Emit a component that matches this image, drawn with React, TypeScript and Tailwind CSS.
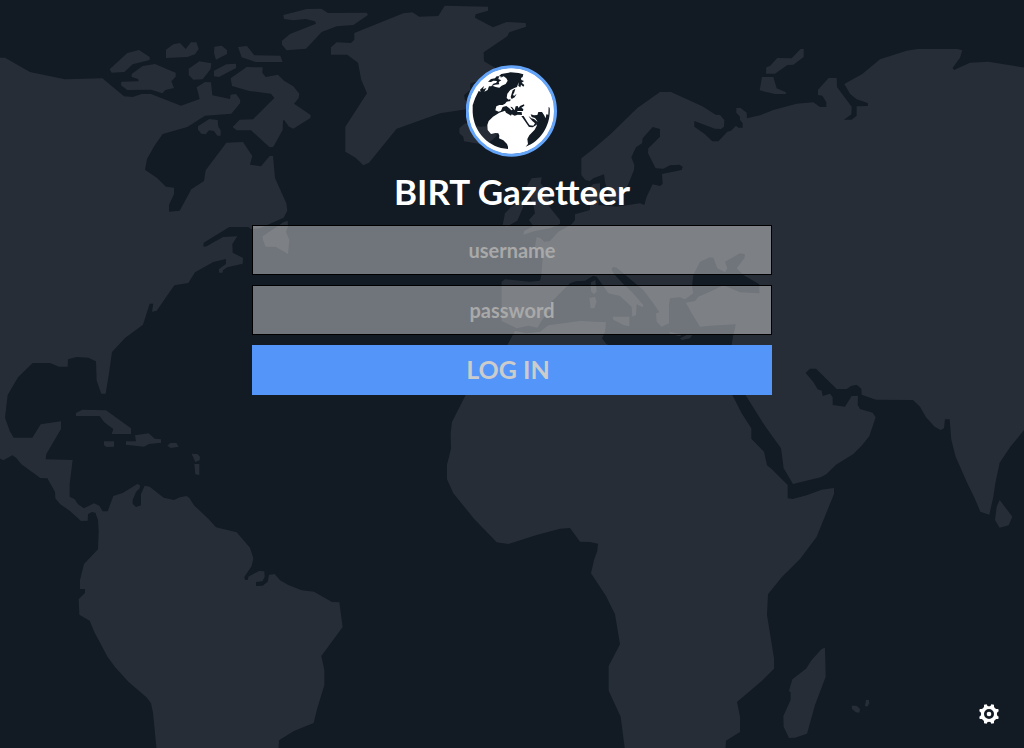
import type { FormEvent } from "react";

type Land = { d: string; x?: number; y?: number };

const LANDS: Land[] = [
  // The Americas
  {
    d: "M-10 173L15 173 90 216 195 238 307 235 372 289 398 291 425 282 453 282 543 317 599 297 590 262 615 246 633 247 637 286 690 297 692 284 708 282 721 300 720 310 694 341 615 347 562 381 488 402 463 438 441 477 435 509 471 534 498 560 522 563 522 582 507 615 507 635 539 632 574 568 612 543 617 511 679 428 729 426 757 468 750 494 783 499 809 468 819 468 825 534 859 610 862 632 851 653 780 685 752 687 745 681 688 681 611 728 610 740 620 739 669 711 712 709 697 732 698 758 729 774 728 791 682 802 669 811 668 818 657 818 657 807 678 792 678 777 640 786 585 817 565 849 523 856 470 932 456 935 460 911 449 911 429 974 375 1014 336 1056 327 1120 317 1181 304 1181 290 1142 288 1084 265 1073 230 1071 204 1078 203 1100 177 1100 150 1089 98 1089 54 1132 23 1185 15 1253 29 1292 41 1313 97 1313 122 1273 183 1264 183 1287 139 1362 137 1378 218 1380 209 1452 209 1490 224 1498 234 1513 252 1525 282 1510 298 1517 308 1534 323 1534 340 1488 368 1479 412 1452 420 1456 419 1465 408 1476 398 1500 398 1512 408 1521 423 1516 423 1483 434 1457 449 1460 491 1493 522 1500 540 1492 560 1488 568 1494 583 1517 625 1556 648 1582 710 1597 750 1643 760 1675 755 1698 733 1731 735 1740 744 1739 745 1730 777 1713 793 1714 794 1731 787 1744 768 1746 768 1758 788 1757 803 1745 807 1725 824 1722 840 1741 865 1755 905 1771 942 1775 996 1806 1018 1807 1028 1881 964 1968 973 2010 973 2056 951 2128 941 2169 882 2193 837 2221 835 2250 470 2250 459 2138 453 2110 441 2093 385 2045 345 2001 323 1971 283 1896 269 1862 238 1844 236 1798 255 1779 255 1767 240 1767 240 1740 252 1692 294 1648 296 1592 294 1560 286 1538 275 1536 264 1543 263 1562 243 1563 210 1533 180 1512 166 1495 165 1475 142 1435 121 1434 64 1393 49 1374 37 1366 10 1381 -10 1370Z",
  },
  // Canadian Arctic islands
  { d: "M329 208L382 159 417 150 449 171 449 180 398 193 373 216 335 218Z" },
  { d: "M395 222L428 198 465 192 527 218 527 230 514 244 522 264 496 270 487 280 453 269 382 270 363 256 364 245 416 244 414 237 395 231Z" },
  { d: "M498 149L520 133 540 129 557 147 573 127 589 127 596 147 585 163 562 171 498 174Z" },
  { d: "M566 206L598 184 634 190 632 207 608 238 580 239 566 225Z" },
  { d: "M643 140L665 137 681 150 681 162 648 179 642 160Z" },
  { d: "M642 212L679 193 708 191 708 204 657 231 642 229Z" },
  { d: "M714 141L741 138 763 166 841 167 848 186 767 186 725 172Z" },
  { d: "M692 235L740 201 788 202 787 218 797 231 834 224 852 242 880 259 898 281 896 294 882 311 932 345 931 354 880 386 867 380 853 361 849 361 848 390 820 440 809 442 753 391 710 391 698 381 719 359 759 358 823 294 813 281 748 273 696 258Z" },
  { d: "M594 379L628 357 653 360 655 380 662 391 662 407 652 407 642 393 627 391 617 403 604 401 594 389Z" },
  { d: "M850 45L920 27 964 26 984 39 1100 38 1104 45 1060 75 1010 79 965 96 918 146 860 151 846 134 846 122 870 102 948 71 945 64 917 57 880 61 852 57Z" },
  // Greenland, Iceland, Newfoundland
  { d: "M993 142L1010 127 1053 129 1063 119 1063 99 1210 40 1237 37 1258 50 1315 48 1334 17 1464 20 1464 32 1427 43 1425 53 1479 82 1520 66 1577 69 1578 80 1528 97 1522 109 1451 157 1452 184 1488 205 1470 235 1411 250 1410 270 1392 286 1395 300 1425 310 1400 328 1320 340 1190 386 1107 488 1090 496 1067 473 1036 455 1036 380 1101 280 1084 240 1074 188 1042 164 993 164Z" },
  { d: "M1378 385L1395 370 1420 375 1440 380 1470 378 1490 395 1490 408 1470 425 1440 432 1392 424 1390 410 1378 400Z" },
  { d: "M788 709L850 667 863 662 864 680 858 695 868 720 864 762 828 741 797 740 789 720Z" },
  // Caribbean
  { d: "M228 1239L247 1229 318 1231 393 1285 393 1302 335 1302 340 1287 313 1267 299 1248 228 1248Z" },
  { d: "M312 1324L342 1324 342 1340 320 1341 312 1336Z" },
  { d: "M378 1324L408 1324 405 1306 446 1300 464 1316 483 1318 483 1328 447 1332 432 1340 378 1334Z" },
  { d: "M502 1337L511 1329 529 1329 536 1340 512 1344Z" },
  { d: "M575 1361L592 1362 600 1370 599 1381 586 1386Z" },
  { d: "M583 1392L598 1392 598 1425 586 1423Z" },
  // Europe, Asia and Africa
  {
    d: "M1744 475L1776 450 1833 401 1912 324 1980 276 2013 276 2107 319 2147 344 2160 345 2173 360 2172 380 2163 387 2145 386 2083 363 2083 380 2113 401 2137 424 2155 424 2182 395 2193 392 2208 377 2215 383 2228 383 2228 370 2220 360 2220 350 2209 338 2209 324 2222 324 2240 338 2241 355 2280 346 2320 330 2390 311 2440 307 2460 321 2479 321 2479 307 2467 287 2454 285 2454 269 2486 234 2510 234 2511 261 2555 320 2554 343 2532 359 2555 359 2570 347 2570 319 2604 318 2603 309 2570 298 2550 281 2533 252 2588 221 2640 178 2720 152 2753 147 2872 147 2887 151 2880 173 2858 203 2862 210 2910 188 2965 185 3080 204L3080 1280 3030 1342 2999 1388 2986 1450 2980 1490 2968 1544 2941 1535 2924 1495 2900 1445 2867 1370 2854 1319 2849 1258 2835 1258 2832 1285 2822 1290 2804 1280 2778 1252 2760 1220 2739 1200 2628 1199 2585 1184 2584 1166 2570 1154 2553 1158 2540 1167 2510 1167 2448 1106 2430 1106 2417 1119 2440 1146 2453 1168 2465 1172 2468 1188 2490 1181 2498 1192 2498 1215 2535 1220 2555 1188 2574 1188 2573 1215 2580 1227 2618 1238 2627 1252 2608 1308 2585 1337 2560 1362 2508 1394 2480 1422 2462 1432 2379 1452 2351 1405 2343 1345 2295 1278 2235 1183 2195 1110 2180 1130 2197 1185 2225 1240 2254 1285 2254 1316 2292 1355 2301 1396 2315 1407 2363 1455 2363 1495 2378 1497 2420 1486 2465 1469 2502 1464 2502 1482 2450 1610 2400 1677 2345 1732 2304 1783 2301 1845 2322 1975 2322 2006 2285 2043 2211 2106 2220 2150 2220 2196 2178 2222 2176 2250 1875 2250 1862 2150 1826 2072 1826 1998 1860 1933 1845 1843 1818 1788 1773 1720 1782 1680 1792 1652 1794 1631 1770 1626 1740 1625 1710 1584 1680 1586 1610 1605 1525 1632 1490 1627 1422 1556 1360 1480 1341 1438 1341 1394 1353 1346 1352 1300 1356 1266 1397 1185 1440 1110 1522 1035 1545 993 1580 1000 1620 995 1645 976 1740 963 1818 967 1815 995 1806 1015 1820 1033 1850 1045 2150 1060 2193 1045 2200 1005 2205 985 2207 973 2130 977 2100 980 2075 940 2058 908 2085 903 2095 890 2130 875 2170 855 2220 877 2278 880 2278 853 2230 825 2210 805 2233 775 2235 763 2220 760 2175 785 2182 805 2175 817 2152 805 2140 773 2130 772 2100 785 2080 825 2076 860 2080 880 2055 898 2040 892 2010 895 2007 915 2007 970 1985 980 1970 965 1968 940 1978 937 1960 910 1930 870 1900 845 1850 803 1838 801 1835 810 1845 825 1868 850 1895 875 1930 915 1928 922 1910 913 1908 945 1897 950 1895 920 1860 888 1825 880 1808 855 1790 830 1780 827 1755 842 1728 844 1710 850 1680 880 1650 910 1652 930 1630 955 1612 983 1585 977 1550 985 1505 963 1505 845 1515 838 1590 845 1620 842 1624 825 1627 785 1630 760 1605 740 1610 711 1622 715 1633 725 1650 723 1675 695 1715 673 1725 660 1725 643 1770 630 1770 615 1755 590 1765 565 1780 552 1800 550 1800 570 1795 615 1850 620 1920 610 1933 615 1940 590 1958 553 1980 558 1988 552 1986 522 2045 510 2048 500 2038 494 2010 496 1990 506 1967 505 1944 460 1945 445 1980 410 1980 387 1958 381 1928 415 1926 430 1908 442 1894 472 1903 495 1902 510 1885 552 1865 590 1845 605 1830 600 1815 545 1812 523 1780 535 1770 543 1756 540 1744 525Z",
  },
  // British Isles
  { x: 1440, y: 450, d: "M155 85L185 82 182 100 205 130 208 170 240 210 240 222 210 235 165 243 130 254 133 242 160 228 147 210 165 190 160 165 150 140 140 110Z" },
  { x: 1440, y: 450, d: "M68 225L75 190 92 172 125 150 130 170 112 212 80 230Z" },
  // Novaya Zemlya
  { d: "M2299 202L2310 198 2332 174 2375 175 2402 147 2411 147 2411 171 2380 194 2362 195 2325 221 2298 221Z" },
  { d: "M2286 231L2320 231 2330 265 2358 277 2357 282 2325 282 2279 271Z" },
  // Mediterranean islands
  { x: 1440, y: 645, d: "M333 202L346 195 350 230 341 238 333 228ZM328 249L345 245 350 260 343 280 332 280ZM398 305L448 305 448 334 430 330 400 314ZM568 350L606 358 600 364 570 357ZM600 370L620 360 638 358 630 370 606 375Z" },
  // Indian Ocean islands
  { x: 2220, y: 1020, d: "M779 480L817 530 806 556 779 563 765 540 770 500ZM335 1097L350 1097 360 1107 358 1118 348 1117 336 1107ZM378 1079L387 1080 388 1090 382 1100 375 1098Z" },
  { x: 1290, y: 1020, d: "M1185 923L1187 1010 1155 1095 1131 1181 1095 1193 1077 1194 1061 1160 1060 1128 1082 1080 1082 1057 1077 1053 1087 1018 1128 986 1145 960 1175 927Z" },
];

function WorldMap() {
  return (
    <svg
      aria-hidden="true"
      className="absolute inset-0 h-full w-full"
      viewBox="0 0 3072 2244"
      preserveAspectRatio="xMidYMid slice"
      fill="#272d36"
    >
      {LANDS.map(({ d, x = 0, y = 0 }, i) => (
        <path key={i} d={d} transform={`translate(${x} ${y})`} />
      ))}
    </svg>
  );
}

function Globe() {
  return (
    <svg aria-hidden="true" className="size-[92px]" viewBox="32 28 276 276">
      <path
        fill="#fff"
        fillRule="evenodd"
        d="M38 166a130 130 0 1 0 260 0a130 130 0 1 0 -260 0Z
        M138 55L166 50 190 52 204 56 202 64 197 67 198 73 206 76 199 81 207 88 204 93 197 87 195 95 189 91 190 80 185 94 177 97 165 103 156 114 154 127 160 132 165 130 165 136 154 138 149 144 142 148 132 148 123 152 120 164 130 168 137 165 142 154 153 151 161 157 168 164 172 162 165 153 170 154 178 164 181 152 187 151 190 157 194 151 206 146 207 150 198 156 204 160 203 166 187 166 185 169 199 169 200 178 187 177 178 180 169 176 167 180 152 171 149 165 132 171 113 183 100 196 96 208 97 223 107 235 120 232 129 233 132 240 131 248 144 254 155 265 158 273 158 280
        C101 277 55 231 52 170L52 148 60 126 70 106 76 108 74 102 86 91 83 101 93 97 87 108 97 103 101 92 108 92 114 84 123 81 125 76 114 75 107 79 98 78 107 70 119 68 124 62 132 62 129 69 145 62 153 68 157 75 151 85 139 90 132 96 121 94 111 90 119 87 132 86 130 79 138 74 127 69 142 65 131 61Z
        M172 104L180 99 177 110 173 117 176 121 184 114 178 125 169 130 166 124Z
        M198 181L205 181 216 199 223 209 234 210 239 203 231 196 224 188 220 181 228 188 236 190 246 198 244 207 232 215 221 214Z
        M226 176L236 179 246 178 249 169 260 169 266 178 271 188 273 176 279 177 280 153 283 157C287 205 259 256 211 273L218 265 216 250 222 239 238 222 244 211 246 197 239 187 229 184Z"
      />
      <circle cx="168" cy="166" r="132.5" fill="none" stroke="#64a4f8" strokeWidth="9" />
    </svg>
  );
}

function Gear() {
  return (
    <svg aria-hidden="true" className="size-5" viewBox="-30 -30 60 60">
      <path
        fill="#fff"
        fillRule="evenodd"
        d="M-15 -28L-7 -29L-5 -25Q0 -22 5 -25L7 -29L15 -28L15 -22Q17 -17 22 -15L28 -15L29 -8L25 -5Q22 0 25 5L29 8L28 15L22 15Q17 17 15 22L15 28L7 29L5 25Q0 22 -5 25L-7 29L-15 28L-15 22Q-17 17 -22 15L-28 15L-29 8L-25 5Q-22 0 -25 -5L-29 -8L-28 -15L-22 -15Q-17 -17 -15 -22Z M0 -15A15 15 0 1 0 0 15A15 15 0 1 0 0 -15Z"
      />
      <circle r="7" fill="#fff" />
    </svg>
  );
}

const fieldClass =
  "h-[50px] w-full border border-black bg-white/40 px-4 text-center text-xl font-bold text-white outline-none placeholder:text-[#a9a9a9] placeholder:opacity-100 focus:bg-white/50";

export default function App() {
  const submit = (event: FormEvent) => event.preventDefault();

  return (
    <main className="relative flex min-h-screen flex-col items-center overflow-hidden bg-[#121a23] px-4 pt-[65px] font-['Lato',sans-serif]">
      <WorldMap />
      <div className="relative flex w-full max-w-[520px] flex-col items-center">
        <Globe />
        <h1 className="mt-3 mb-3 text-[35px] leading-[44px] font-bold text-white">BIRT Gazetteer</h1>
        <form onSubmit={submit} className="flex w-full flex-col gap-2.5">
          <input type="text" aria-label="username" placeholder="username" autoComplete="username" className={fieldClass} />
          <input type="password" aria-label="password" placeholder="password" autoComplete="current-password" className={fieldClass} />
          <button type="submit" className="h-[50px] w-full cursor-pointer bg-[#5495f9] pr-2 text-[25px] font-bold text-[#ccc]">
            LOG IN
          </button>
        </form>
      </div>
      <button type="button" aria-label="Settings" className="absolute right-[25px] bottom-6 cursor-pointer">
        <Gear />
      </button>
    </main>
  );
}
